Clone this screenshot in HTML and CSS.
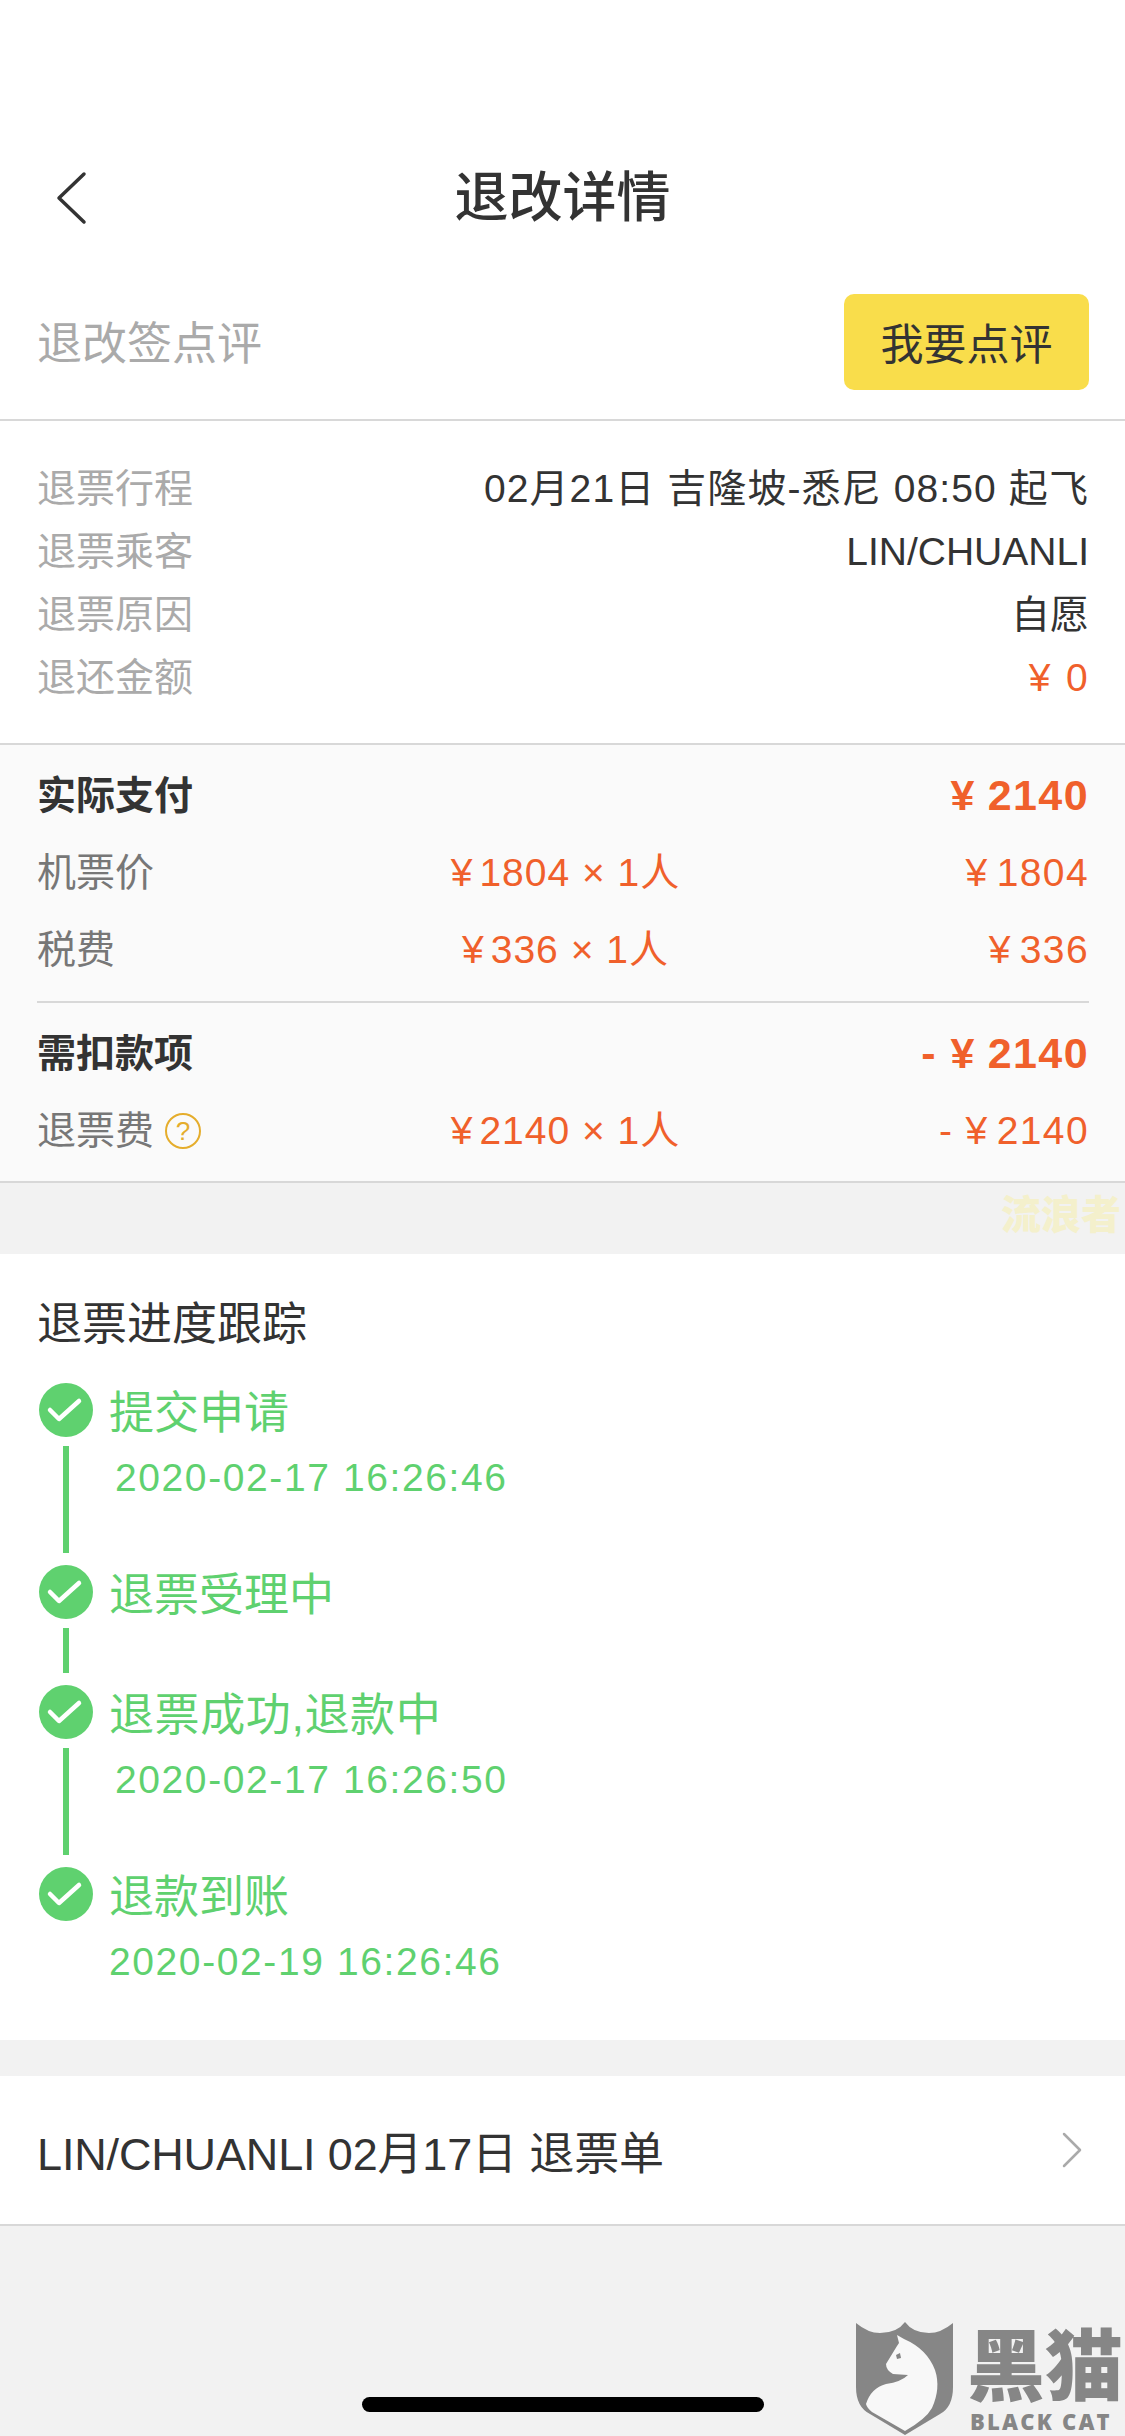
FILE: index.html
```html
<!DOCTYPE html>
<html lang="zh-CN">
  <head>
    <meta charset="utf-8">
    <title>退改详情</title>
    <link rel="stylesheet" href="styles.css">
  </head>

  <body>
    <div class="page">

      <div class="nav">
        <svg class="nav-back" width="32" height="54" viewBox="0 0 32 54">
          <path d="M28 3 L3 27 L28 51" fill="none" stroke="#333" stroke-width="3.5" stroke-linecap="round" stroke-linejoin="round"/>
        </svg>
        <div class="nav-title">退改详情</div>
      </div>

      <div class="review">
        <span class="review-label">退改签点评</span>
        <button class="review-btn">我要点评</button>
      </div>

      <div class="info">
        <div class="info-row"><span class="info-label">退票行程</span><span class="info-trip">02月21日 吉隆坡-悉尼 08:50 起飞</span></div>
        <div class="info-row"><span class="info-label">退票乘客</span><span>LIN/CHUANLI</span></div>
        <div class="info-row"><span class="info-label">退票原因</span><span>自愿</span></div>
        <div class="info-row"><span class="info-label">退还金额</span><span class="orange"><span class="yen">¥</span>0</span></div>
      </div>

      <div class="fee">
        <div class="fee-group">
          <div class="fee-row fee-head"><span>实际支付</span><span></span><span class="orange amount"><span class="yen">¥</span>2140</span></div>
          <div class="fee-row"><span>机票价</span><span class="orange mid"><span class="yen">¥</span>1804 × 1人</span><span class="orange amount"><span class="yen">¥</span>1804</span></div>
          <div class="fee-row"><span>税费</span><span class="orange mid"><span class="yen">¥</span>336 × 1人</span><span class="orange amount"><span class="yen">¥</span>336</span></div>
        </div>
        <div class="fee-line"></div>
        <div class="fee-group">
          <div class="fee-row fee-head"><span>需扣款项</span><span></span><span class="orange amount">- <span class="yen">¥</span>2140</span></div>
          <div class="fee-row">
            <span class="fee-name">退票费<span class="help">?</span></span>
            <span class="orange mid"><span class="yen">¥</span>2140 × 1人</span>
            <span class="orange amount">- <span class="yen">¥</span>2140</span>
          </div>
        </div>
      </div>

      <div class="watermark">流浪者</div>

      <div class="track">
        <div class="track-title">退票进度跟踪</div>

        <div class="step">
          <div class="step-mark">
            <svg width="54" height="54" viewBox="0 0 54 54"><circle cx="27" cy="27" r="27" fill="#5fd16f"/><path d="M11 27 L20 36 L40 18" fill="none" stroke="#fff" stroke-width="4.5" stroke-linecap="round" stroke-linejoin="round"/></svg>
            <div class="step-line"></div>
          </div>
          <div class="step-body">
            <div class="step-name">提交申请</div>
            <div class="step-date indent">2020-02-17 16:26:46</div>
          </div>
        </div>

        <div class="step">
          <div class="step-mark">
            <svg width="54" height="54" viewBox="0 0 54 54"><circle cx="27" cy="27" r="27" fill="#5fd16f"/><path d="M11 27 L20 36 L40 18" fill="none" stroke="#fff" stroke-width="4.5" stroke-linecap="round" stroke-linejoin="round"/></svg>
            <div class="step-line"></div>
          </div>
          <div class="step-body">
            <div class="step-name">退票受理中</div>
          </div>
        </div>

        <div class="step">
          <div class="step-mark">
            <svg width="54" height="54" viewBox="0 0 54 54"><circle cx="27" cy="27" r="27" fill="#5fd16f"/><path d="M11 27 L20 36 L40 18" fill="none" stroke="#fff" stroke-width="4.5" stroke-linecap="round" stroke-linejoin="round"/></svg>
            <div class="step-line"></div>
          </div>
          <div class="step-body">
            <div class="step-name step-name-long">退票成功,退款中</div>
            <div class="step-date indent">2020-02-17 16:26:50</div>
          </div>
        </div>

        <div class="step step-last">
          <div class="step-mark">
            <svg width="54" height="54" viewBox="0 0 54 54"><circle cx="27" cy="27" r="27" fill="#5fd16f"/><path d="M11 27 L20 36 L40 18" fill="none" stroke="#fff" stroke-width="4.5" stroke-linecap="round" stroke-linejoin="round"/></svg>
          </div>
          <div class="step-body">
            <div class="step-name">退款到账</div>
            <div class="step-date">2020-02-19 16:26:46</div>
          </div>
        </div>
      </div>

      <div class="order">
        <span>LIN/CHUANLI 02月17日 退票单</span>
        <svg width="20" height="36" viewBox="0 0 20 36">
          <path d="M2 2 L18 18 L2 34" fill="none" stroke="#aaa" stroke-width="2.5" stroke-linecap="round" stroke-linejoin="round"/>
        </svg>
      </div>

      <div class="logo">
        <svg class="logo-shield" width="97" height="114" viewBox="0 0 97 114">
          <path d="M0 1 Q12 11 24 11 Q41 11 49 0 Q57 11 73 11 Q85 11 97 1 V65 Q97 85 84 92 L49 113 L14 92 Q0 85 0 65 Z" fill="#868686"/>
          <path d="M41 13 L48 17 Q71 27 79 48 Q85 66 76 86 Q70 97 49 109 L16 90 Q11 86 10 82 Q15 66 30 62 Q45 60 52 53 L37 52 Q30 48 30 42 L41 24 L43 21 Z" fill="#f8f8f8"/>
          <path d="M40 33 L44 31 L45 36 L41 37 Z" fill="#868686"/>
        </svg>
        <div class="logo-text">
          <div class="logo-cn">黑猫</div>
          <div class="logo-en">BLACK CAT</div>
        </div>
      </div>

      <div class="home-bar"></div>
    </div>
  </body>
</html>
```

FILE: styles.css
```css
body{
  margin: 0;
  background-color: #f2f2f2;
}
.page{
  position: relative;
  width: 1125px;
  height: 2436px;
  overflow: hidden;
  font-family: "Liberation Sans", "Noto Sans CJK SC", sans-serif;
  font-size: 39px;
  color: #333;
}
.orange{
  color: #f0602b;
  letter-spacing: 1.4px;
}
.yen{
  margin-right: 8px;
}

.nav{
  position: relative;
  display: flex;
  justify-content: center;
  padding-top: 151px;
  height: 93px;
  background-color: #fff;
}
.nav-back{
  position: absolute;
  left: 56px;
  top: 171px;
}
.nav-title{
  font-size: 54px;
  font-weight: 500;
  line-height: 94px;
}

.review{
  display: flex;
  justify-content: space-between;
  align-items: center;
  padding: 50px 36px 29px 37px;
  background-color: #fff;
  border-bottom: 2px solid #d8d8d8;
}
.review-label{
  font-size: 45px;
  line-height: 60px;
  margin-top: 6px;
  color: #aaa;
}
.review-btn{
  width: 245px;
  height: 96px;
  padding: 0 0 3px;
  border: none;
  border-radius: 10px;
  background-color: #f9dd4b;
  color: #333;
  font-family: inherit;
  font-size: 43px;
}

.info{
  padding: 36px 36px 34px 37px;
  background-color: #fff;
}
.info-row{
  display: flex;
  justify-content: space-between;
  height: 63px;
  line-height: 63px;
}
.info-label{
  color: #aaa;
}
.info-trip{
  letter-spacing: 1.1px;
}
.info .yen{
  margin-right: 14px;
}

.fee{
  padding: 12px 36px 12px 37px;
  background-color: #fafafa;
  border-top: 2px solid #d8d8d8;
  border-bottom: 2px solid #d8d8d8;
}
.fee-group{
  padding-bottom: 13px;
}
.fee-group:last-child{
  padding-top: 12px;
  padding-bottom: 0;
}
.fee-line{
  height: 2px;
  background-color: #d8d8d8;
}
.fee-row{
  display: grid;
  grid-template-columns: 1fr auto 1fr;
  align-items: center;
  height: 77px;
  line-height: 77px;
  color: #777;
}
.fee-head{
  color: #333;
  font-weight: 700;
}
.fee-head .amount{
  font-size: 43px;
}
.fee-head .yen{
  margin-right: 12px;
}
.amount{
  text-align: right;
}
.mid{
  margin-left: 5px;
  letter-spacing: 1px;
}
.mid .yen{
  margin-right: 6px;
}
.fee-name{
  display: flex;
  align-items: center;
}
.help{
  display: flex;
  justify-content: center;
  align-items: center;
  width: 32px;
  height: 32px;
  margin-left: 11px;
  border: 2px solid #e5ad2c;
  border-radius: 50%;
  color: #e5ad2c;
  font-size: 26px;
  line-height: 1;
}

.watermark{
  position: absolute;
  left: 1001px;
  top: 1193px;
  font-size: 40px;
  font-weight: 900;
  line-height: 44px;
  color: #f4f0cc;
}

.track{
  margin-top: 71px;
  padding: 36px 36px 48px 37px;
  background-color: #fff;
}
.track-title{
  font-size: 45px;
  line-height: 64px;
  margin-bottom: 29px;
  position: relative;
  top: 3px;
}
.step{
  display: flex;
  gap: 16px;
  padding-left: 2px;
  color: #5fd16f;
}
.step-mark{
  display: flex;
  flex-direction: column;
  align-items: center;
  width: 54px;
}
.step-mark svg{
  flex: none;
  display: block;
}
.step-line{
  flex: 1;
  width: 6px;
  margin: 9px 0 12px;
  background-color: #5fd16f;
}
.step-body{
  padding-bottom: 66px;
}
.step-last .step-body{
  padding-bottom: 9px;
}
.step-name{
  font-size: 45px;
  line-height: 54px;
  padding-top: 4px;
  margin-bottom: -4px;
}
.step-name-long{
  letter-spacing: 0.6px;
}
.step-date{
  margin-top: 19px;
  line-height: 43px;
  letter-spacing: 1.6px;
}
.indent{
  padding-left: 6px;
}

.order{
  display: flex;
  justify-content: space-between;
  align-items: center;
  margin-top: 36px;
  height: 148px;
  padding: 0 43px 0 37px;
  background-color: #fff;
  border-bottom: 2px solid #d8d8d8;
  font-size: 45px;
  letter-spacing: -0.15px;
}

.logo{
  position: absolute;
  left: 856px;
  top: 2322px;
  display: flex;
  gap: 14px;
}
.logo-cn{
  margin-top: 6px;
  font-size: 78px;
  font-weight: 900;
  line-height: 80px;
  color: #868686;
  white-space: nowrap;
}
.logo-en{
  margin-top: 1px;
  padding-left: 3px;
  font-family: "Open Sans", sans-serif;
  font-size: 22px;
  font-weight: 800;
  line-height: 24px;
  letter-spacing: 2.2px;
  color: #868686;
  white-space: nowrap;
}

.home-bar{
  position: absolute;
  left: 362px;
  top: 2397px;
  width: 402px;
  height: 15px;
  border-radius: 8px;
  background-color: #000;
}
```
